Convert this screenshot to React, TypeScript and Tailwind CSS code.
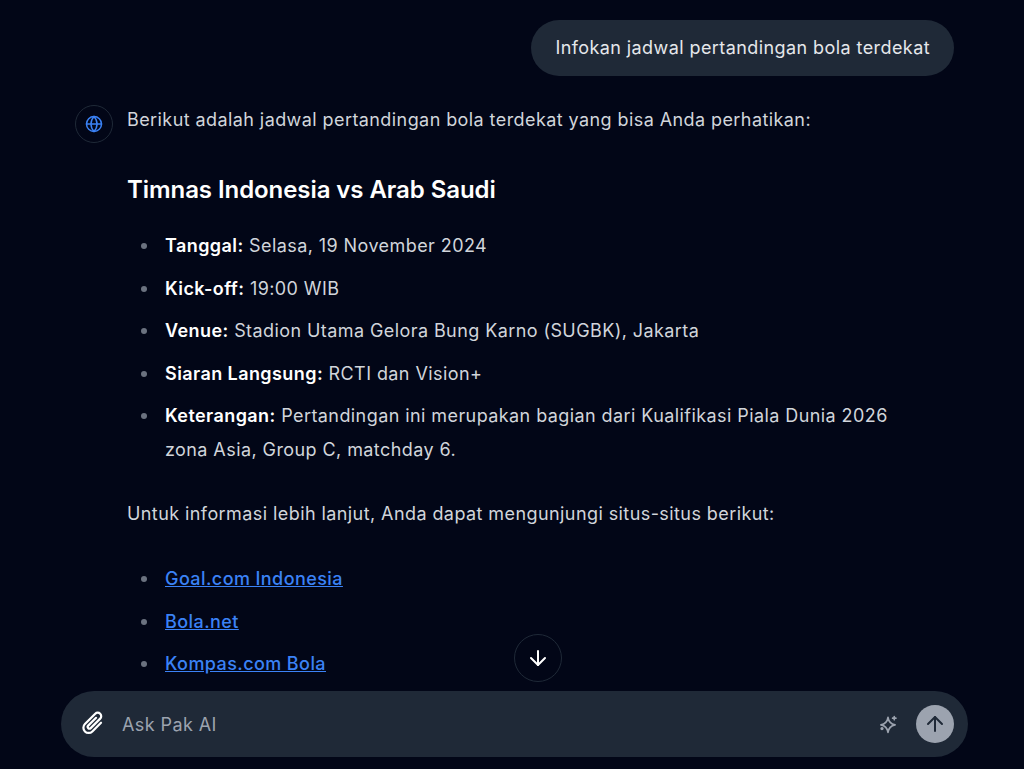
import React from 'react';
import { ArrowDown, ArrowUp, Globe } from 'lucide-react';

const details = [
  { label: 'Tanggal:', text: 'Selasa, 19 November 2024' },
  { label: 'Kick-off:', text: '19:00 WIB' },
  { label: 'Venue:', text: 'Stadion Utama Gelora Bung Karno (SUGBK), Jakarta' },
  { label: 'Siaran Langsung:', text: 'RCTI dan Vision+' },
  {
    label: 'Keterangan:',
    text: 'Pertandingan ini merupakan bagian dari Kualifikasi Piala Dunia 2026 zona Asia, Group C, matchday 6.',
  },
];

const links = ['Goal.com Indonesia', 'Bola.net', 'Kompas.com Bola'];

const Bullet: React.FC<{ children: React.ReactNode }> = ({ children }) => (
  <li className="flex">
    <span className="flex h-[34px] w-[38px] shrink-0 items-center pl-[14px]">
      <span className="h-[6px] w-[6px] rounded-full bg-[#6b7280]" />
    </span>
    <div className="min-w-0 flex-1">{children}</div>
  </li>
);

const ClipIcon = () => (
  <svg viewBox="0 0 24 24" fill="none" stroke="currentColor" strokeWidth="1.9" strokeLinecap="round" className="h-7 w-7 text-white">
    <g transform="rotate(45 12 12)">
      <path d="M15.5 7V17.5a4.5 4.5 0 0 1-9 0V5a3 3 0 0 1 6 0V16.5a1.5 1.5 0 0 1-3 0V7" />
    </g>
  </svg>
);

const StarIcon = () => (
  <svg viewBox="0 0 24 24" fill="none" stroke="currentColor" strokeWidth="2" strokeLinejoin="round" strokeLinecap="round" className="mr-[18px] h-5 w-5 text-[#9ca3af]">
    <path d="M12 4C12.8 9.5 15 12 20.5 13C15 14 12.8 16.5 12 22C11.2 16.5 9 14 3.5 13C9 12 11.2 9.5 12 4Z" />
    <path d="M19.5 3v4M17.5 5h4" />
    <circle cx="4.8" cy="17.5" r="1" fill="currentColor" />
  </svg>
);

const App: React.FC = () => {
  return (
    <div className="relative flex h-[769px] w-full flex-col overflow-hidden bg-[#020617] font-['Inter',sans-serif] text-[18px] leading-[34px] tracking-[0.42px] text-[#d1d5db]">
      <div className="flex-1 overflow-hidden pl-[75px] pr-[70px] pt-5">
        <div className="flex justify-end">
          <div className="rounded-[28px] bg-[#1f2937] px-6 py-[11px] text-[#e5e7eb]">
            Infokan jadwal pertandingan bola terdekat
          </div>
        </div>

        <div className="mt-[27px] flex gap-[14px]">
          <div className="mt-[2px] flex h-[38px] w-[38px] shrink-0 items-center justify-center rounded-full border border-[#1f2937]">
            <Globe className="h-[18px] w-[18px] text-[#3b82f6]" />
          </div>
          <div className="min-w-0 flex-1 pr-[50px]">
            <p>Berikut adalah jadwal pertandingan bola terdekat yang bisa Anda perhatikan:</p>
            <h2 className="mt-9 text-[24px] leading-[34px] font-semibold tracking-[-0.07px] text-white">
              Timnas Indonesia vs Arab Saudi
            </h2>
            <ul className="mt-[22px] flex flex-col gap-[8.5px]">
              {details.map((item) => (
                <Bullet key={item.label}>
                  <strong className="font-semibold text-white">{item.label}</strong> {item.text}
                </Bullet>
              ))}
            </ul>
            <p className="mt-[30px]">Untuk informasi lebih lanjut, Anda dapat mengunjungi situs-situs berikut:</p>
            <ul className="mt-[31px] flex flex-col gap-[8.5px]">
              {links.map((link) => (
                <Bullet key={link}>
                  <a href="#" className="font-medium text-[#3b82f6] underline">
                    {link}
                  </a>
                </Bullet>
              ))}
            </ul>
          </div>
        </div>
      </div>

      <button
        aria-label="Scroll to bottom"
        className="absolute left-[514px] top-[634px] flex h-12 w-12 items-center justify-center rounded-full border border-[#1f2937] bg-[#020617] text-white"
      >
        <ArrowDown className="h-6 w-6" />
      </button>

      <div className="pb-3 pl-[61px] pr-14">
        <div className="flex h-[66px] items-center rounded-[33px] bg-[#1f2937] pl-[19px] pr-[14px]">
          <ClipIcon />
          <span className="ml-[14px] flex-1 pt-[2px] text-[#9ca3af]">Ask Pak AI</span>
          <StarIcon />
          <div className="flex h-[38px] w-[38px] items-center justify-center rounded-full bg-[#9ca3af]">
            <ArrowUp className="h-6 w-6 text-[#1f2937]" />
          </div>
        </div>
      </div>
    </div>
  );
};

export default App;
